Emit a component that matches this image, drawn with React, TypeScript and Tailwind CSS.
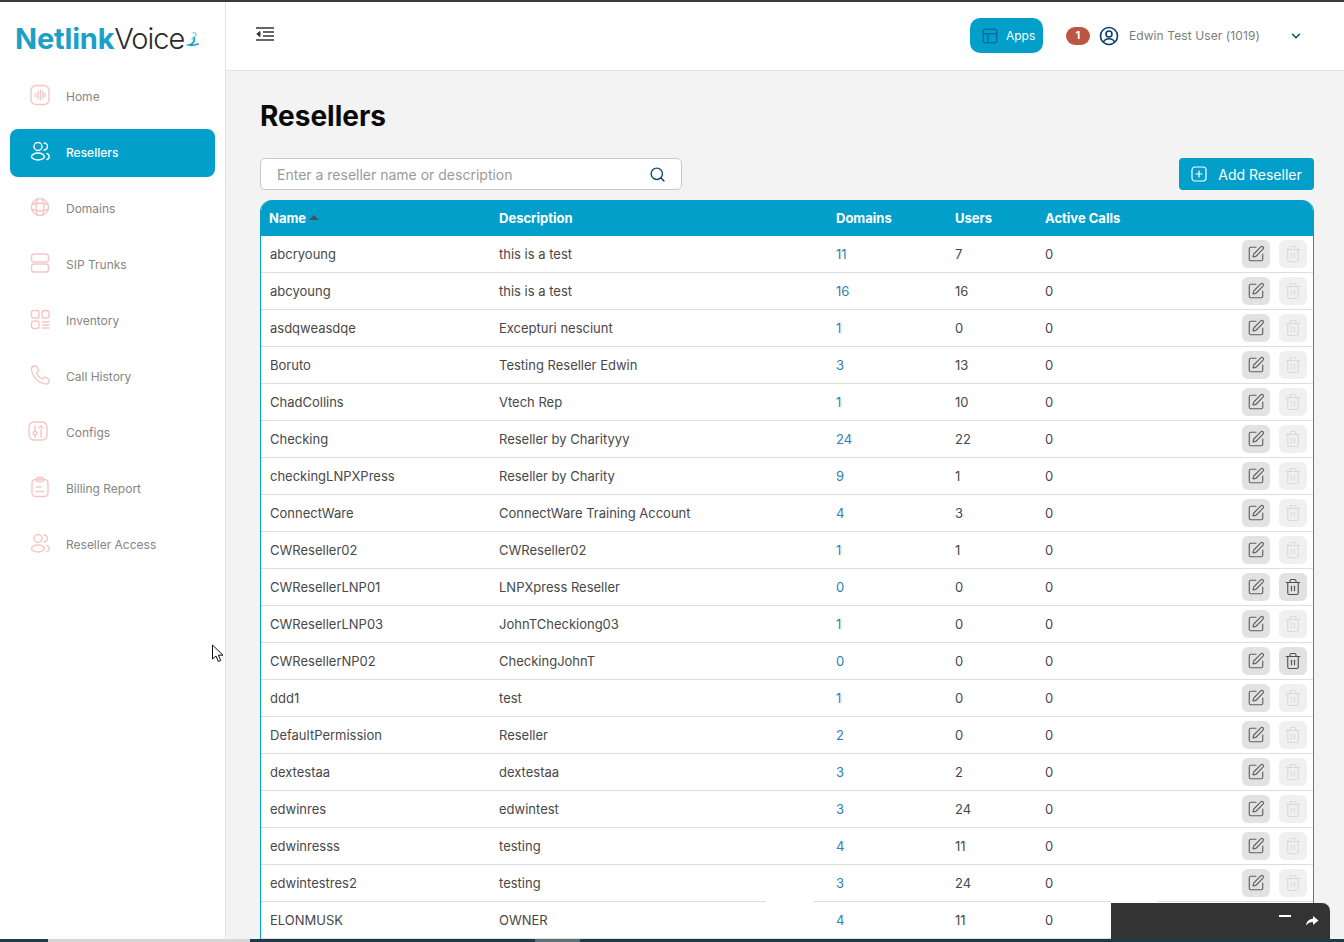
import { ChevronDown, PanelsTopLeft, Search, SquarePen, Trash2 } from 'lucide-react'

type Row = { name: string; desc: string; domains: string; users: string; canDelete?: boolean }

const rows: Row[] = [
  { name: 'abcryoung', desc: 'this is a test', domains: '11', users: '7' },
  { name: 'abcyoung', desc: 'this is a test', domains: '16', users: '16' },
  { name: 'asdqweasdqe', desc: 'Excepturi nesciunt', domains: '1', users: '0' },
  { name: 'Boruto', desc: 'Testing Reseller Edwin', domains: '3', users: '13' },
  { name: 'ChadCollins', desc: 'Vtech Rep', domains: '1', users: '10' },
  { name: 'Checking', desc: 'Reseller by Charityyy', domains: '24', users: '22' },
  { name: 'checkingLNPXPress', desc: 'Reseller by Charity', domains: '9', users: '1' },
  { name: 'ConnectWare', desc: 'ConnectWare Training Account', domains: '4', users: '3' },
  { name: 'CWReseller02', desc: 'CWReseller02', domains: '1', users: '1' },
  { name: 'CWResellerLNP01', desc: 'LNPXpress Reseller', domains: '0', users: '0', canDelete: true },
  { name: 'CWResellerLNP03', desc: 'JohnTCheckiong03', domains: '1', users: '0' },
  { name: 'CWResellerNP02', desc: 'CheckingJohnT', domains: '0', users: '0', canDelete: true },
  { name: 'ddd1', desc: 'test', domains: '1', users: '0' },
  { name: 'DefaultPermission', desc: 'Reseller', domains: '2', users: '0' },
  { name: 'dextestaa', desc: 'dextestaa', domains: '3', users: '2' },
  { name: 'edwinres', desc: 'edwintest', domains: '3', users: '24' },
  { name: 'edwinresss', desc: 'testing', domains: '4', users: '11' },
  { name: 'edwintestres2', desc: 'testing', domains: '3', users: '24' },
  { name: 'ELONMUSK', desc: 'OWNER', domains: '4', users: '11' },
]

function NavIcon({ name }: { name: string }) {
  const common = {
    width: 24,
    height: 24,
    viewBox: '0 0 24 24',
    fill: 'none',
    stroke: 'currentColor',
    strokeWidth: 1.4,
    strokeLinecap: 'round' as const,
    strokeLinejoin: 'round' as const,
  }
  if (name === 'Home')
    return (
      <svg {...common}>
        <rect x="3" y="2.500" width="18" height="19" rx="5" />
        <path d="M7.500 10.500v3M10 8.500v7M12.500 7v10M15 8.500v7M17 10.500v3" />
      </svg>
    )
  if (name === 'Resellers' || name === 'Reseller Access')
    return (
      <svg {...common}>
        <circle cx="10" cy="7.500" r="4" />
        <ellipse cx="10" cy="17.500" rx="6.500" ry="3.500" />
        <path d="M16 4a3.500 3.500 0 0 1 0 7M19 14.500c1.500.6 2.300 1.600 2.300 3s-.8 2.400-2.300 3" />
      </svg>
    )
  if (name === 'Domains')
    return (
      <svg {...common}>
        <circle cx="12" cy="12" r="8.500" />
        <path d="M3.800 9.500c5-1.500 11.400-1.500 16.400 0M3.800 14.500c5 1.500 11.400 1.500 16.400 0M9.500 3.800c-1.800 5-1.800 11.400 0 16.400M14.500 3.800c1.800 5 1.800 11.400 0 16.400" />
      </svg>
    )
  if (name === 'SIP Trunks')
    return (
      <svg {...common}>
        <rect x="3.500" y="3" width="17" height="8" rx="2.500" />
        <rect x="3.500" y="13" width="17" height="8" rx="2.500" />
      </svg>
    )
  if (name === 'Inventory')
    return (
      <svg {...common}>
        <rect x="3.500" y="3.500" width="7.500" height="7.500" rx="2" />
        <rect x="14" y="3.500" width="7" height="7.500" rx="2.500" />
        <rect x="3.500" y="14" width="7.500" height="7.500" rx="2.500" />
        <path d="M14.500 15h6.500M14.500 18h6.500M14.500 21h6.500" />
      </svg>
    )
  if (name === 'Call History')
    return (
      <svg {...common}>
        <path d="M5 3.500 7.500 3c.8 0 1.300.4 1.600 1l1.300 3c.2.600.1 1.200-.4 1.700L8.500 10.200c1.200 2.600 3 4.500 5.500 5.800l1.600-1.400c.5-.4 1.100-.5 1.700-.3l3 1.400c.7.300 1 .9.900 1.600l-.5 2.200c-.2.900-1 1.500-1.900 1.500C11 20.800 3.200 13 3.500 5.400c0-.9.600-1.700 1.500-1.900Z" />
      </svg>
    )
  if (name === 'Configs')
    return (
      <svg {...common}>
        <rect x="3" y="3" width="18" height="18" rx="5" />
        <circle cx="9" cy="14" r="1.800" />
        <path d="M9 7v5M9 16v2M15 18v-8M13 9l2-2 2 2" />
      </svg>
    )
  return (
    <svg {...common}>
      <rect x="4" y="4.500" width="16" height="17" rx="3.500" />
      <rect x="8.500" y="2.500" width="7" height="4" rx="1.500" />
      <path d="M8 12h5M8 16.500h8" />
    </svg>
  )
}

const navItems = ['Home', 'Resellers', 'Domains', 'SIP Trunks', 'Inventory', 'Call History', 'Configs', 'Billing Report', 'Reseller Access']

function Sidebar() {
  return (
    <aside className="w-[226px] shrink-0 border-r border-[#e3e3e3] bg-white">
      {/* Logo */}
      <div className="flex h-[71px] items-center pl-[15px] pt-[2px]">
        <span className="text-[29px] leading-none font-bold tracking-[-0.2px] text-[#1ba0c6]">Netlink</span>
        <span className="text-[29px] leading-none font-light tracking-[-1px] text-[#2b2b2b]">Voice</span>
        <svg width="16" height="20" viewBox="0 0 16 18" fill="none" className="mt-[3px] ml-[2px]">
          <path d="M7 2c2.500-1 4 1 2.500 3L6 8" stroke="#8fd0e2" strokeWidth="1.500" strokeLinecap="round" />
          <path d="M8 7c1 3-1 6-5 7 3 1 6 0 9-1" stroke="#1ba0c6" strokeWidth="1.800" strokeLinecap="round" />
        </svg>
      </div>
      <nav className="flex flex-col gap-[8px] px-[10px]">
        {navItems.map((item) => {
          const active = item === 'Resellers'
          const offset = item === 'Configs' ? 'pl-[16px]' : 'pl-[18px]'
          return (
            <div
              key={item}
              className={`flex h-[48px] items-center gap-[14px] rounded-[8px] text-[12px] ${offset} ${
                active ? 'bg-[#019fc9] font-medium text-white' : 'text-[#858585]'
              }`}
            >
              <span className={`-mt-[5px] ${active ? 'text-white' : 'text-[#f6c6c6]'} ${item === 'Configs' ? 'mr-[2px]' : ''}`}>
                <NavIcon name={item} />
              </span>
              <span>{item}</span>
            </div>
          )
        })}
      </nav>
    </aside>
  )
}

function Header() {
  return (
    <header className="flex h-[69px] items-center border-b border-[#e3e3e3] bg-white pr-[41px] pl-[29px]">
      <svg width="20" height="20" viewBox="0 0 20 20" fill="none" stroke="#333333" strokeWidth="1.600" className="-mt-[5px]">
        <path d="M1 4h18M8 8h11M8 12h11M1 16h18" />
        <path d="M5 7.500 1.800 10 5 12.500Z" fill="#333333" strokeWidth="1" strokeLinejoin="round" />
      </svg>
      <div className="-mt-[1px] ml-auto flex items-center">
        <div className="flex h-[35px] w-[73px] items-center gap-[7px] rounded-[10px] bg-[#019fc9] pl-[11px] text-[12px] text-white">
          <PanelsTopLeft size={18} strokeWidth={1.400} className="text-[#0b5d88]" />
          Apps
        </div>
        <span className="ml-[23px] flex h-[18px] w-[24px] items-center justify-center rounded-full bg-[#bd5545] text-[11px] font-bold text-white">1</span>
        <svg width="20" height="20" viewBox="0 0 20 20" fill="none" stroke="#063f6b" strokeWidth="1.600" className="ml-[9px]">
          <circle cx="10" cy="10" r="8.500" />
          <circle cx="10" cy="8" r="3" />
          <path d="M4.500 16c1-2.500 3-3.300 5.500-3.300s4.500.8 5.500 3.300" />
        </svg>
        <span className="ml-[10px] text-[12px] tracking-[0.1px] text-[#7d7d7d]">Edwin Test User (1019)</span>
        <ChevronDown size={14} strokeWidth={2.500} className="ml-[29px] text-[#0b4a75]" />
      </div>
    </header>
  )
}

function ResellerTable() {
  return (
    <div className="overflow-hidden rounded-t-[12px] border-x border-[#019fc9] bg-white">
      <table className="w-full table-fixed border-separate border-spacing-0 text-left text-[13px]">
        <colgroup>
          <col className="w-[238px]" />
          <col className="w-[337px]" />
          <col className="w-[119px]" />
          <col className="w-[90px]" />
          <col />
        </colgroup>
        <thead>
          <tr className="h-[36px] bg-[#019fc9] text-[13px] text-white">
            <th className="pt-[1px] pl-[8px] font-bold">
              Name
              <span className="ml-[3px] inline-block h-0 w-0 -translate-y-[3px] border-x-[5px] border-b-[5px] border-x-transparent border-b-[#3f5560]" />
            </th>
            <th className="pt-[1px] font-bold">Description</th>
            <th className="pt-[1px] font-bold">Domains</th>
            <th className="pt-[1px] font-bold">Users</th>
            <th className="pt-[1px] font-bold">Active Calls</th>
          </tr>
        </thead>
        <tbody>
          {rows.map((r) => (
            <tr key={r.name} className="text-[#484848]">
              <td className="h-[37px] border-b border-[#dedede] pt-[2px] pl-[9px]">{r.name}</td>
              <td className="border-b border-[#dedede] pt-[2px]">{r.desc}</td>
              <td className="border-b border-[#dedede] pt-[2px] text-[#2f7fb5]">{r.domains}</td>
              <td className="border-b border-[#dedede] pt-[2px]">{r.users}</td>
              <td className="border-b border-[#dedede]">
                <div className="flex items-center justify-between pr-[6px]">
                  <span className="pt-[2px]">0</span>
                  <div className="flex gap-[9px]">
                    <span className="flex h-[28px] w-[28px] items-center justify-center rounded-[6px] bg-[#e2e2e2]">
                      <SquarePen size={18} strokeWidth={1.500} className="text-[#5f5f5f]" />
                    </span>
                    <span
                      className={`flex h-[28px] w-[28px] items-center justify-center rounded-[6px] ${
                        r.canDelete ? 'bg-[#e2e2e2]' : 'bg-[#f0f0f0]'
                      }`}
                    >
                      <Trash2 size={18} strokeWidth={1.500} className={r.canDelete ? 'text-[#4f4f4f]' : 'text-[#d9d9d9]'} />
                    </span>
                  </div>
                </div>
              </td>
            </tr>
          ))}
        </tbody>
      </table>
    </div>
  )
}

export default function App() {
  return (
    <div className="relative flex h-[942px] flex-col overflow-hidden bg-white font-['Inter',sans-serif]">
      <div className="h-[2px] shrink-0 bg-[#3a3a3a]" />
      <div className="flex min-h-0 flex-1">
        <Sidebar />
        <div className="flex min-w-0 flex-1 flex-col">
          <Header />
          <main className="min-h-0 flex-1 overflow-hidden bg-[#f3f3f3] pt-[27px] pr-[30px] pl-[34px]">
            <h1 className="text-[28px] leading-[36px] font-bold text-[#0a0a0a]">Resellers</h1>
            <div className="mt-[24px] mb-[10px] flex items-center justify-between">
              <div className="flex h-[32px] w-[422px] items-center justify-between rounded-[5px] border border-[#c9c9c9] bg-white pr-[15px] pl-[16px]">
                <span className="text-[14px] text-[#9a9a9a]">Enter a reseller name or description</span>
                <Search size={17} strokeWidth={2} className="text-[#0b4a75]" />
              </div>
              <div className="flex h-[32px] w-[135px] items-center justify-center gap-[11px] rounded-[4px] bg-[#019fc9] text-[14px] text-white">
                <svg width="16" height="16" viewBox="0 0 16 16" fill="none" stroke="currentColor" strokeWidth="1.200">
                  <rect x="1" y="1" width="14" height="14" rx="3" />
                  <path d="M8 4.500v7M4.500 8h7" />
                </svg>
                Add Reseller
              </div>
            </div>
            <ResellerTable />
          </main>
        </div>
      </div>

      {/* Page-bottom browser strip */}
      <div className="absolute right-0 bottom-0 left-0 flex h-[3px] bg-[#1d3a47]">
        <div className="ml-[48px] h-full w-[202px] bg-[#d6d6d6]" />
        <div className="ml-[285px] h-full w-[45px] bg-[#5d7078]" />
      </div>

      {/* Floating widget + patches over the table */}
      <div className="absolute top-[899px] left-[766px] h-[4px] w-[48px] bg-white" />
      <div className="absolute top-[899px] left-[1111px] h-[4px] w-[46px] bg-white" />
      <div className="absolute top-[903px] left-[1111px] flex h-[36px] w-[219px] items-start justify-end gap-[14px] rounded-tr-[8px] bg-[#333333] pt-[9px] pr-[11px] text-white">
        <span className="mt-[3px] h-[2px] w-[12px] bg-white" />
        <svg width="14" height="14" viewBox="0 0 14 14" fill="currentColor" className="mt-[2px]">
          <path d="M8 2l5.500 4.500L8 11V8C5 8 3 9 1 11.500 1.500 7.500 4 5 8 4.800Z" />
        </svg>
      </div>

      {/* Mouse pointer */}
      <svg width="14" height="20" viewBox="0 0 14 20" className="absolute top-[644px] left-[211px]">
        <path d="M1.500 1v14l3.500-3 2.300 5.500 2.400-1-2.300-5.300h4.600Z" fill="#ffffff" stroke="#111111" strokeWidth="1" />
      </svg>
    </div>
  )
}
